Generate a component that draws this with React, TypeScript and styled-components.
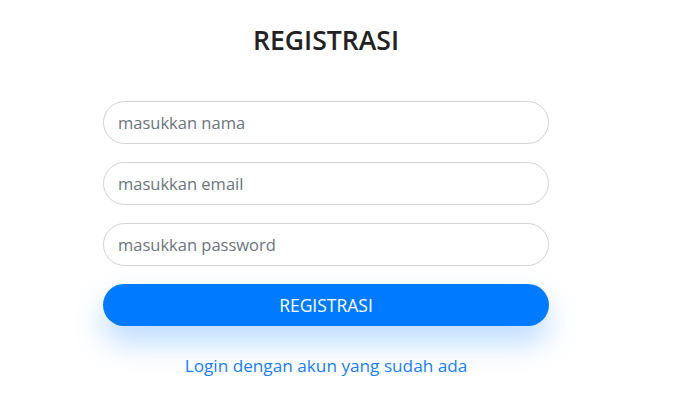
import React from 'react';
import styled, { createGlobalStyle } from 'styled-components';

const GlobalStyle = createGlobalStyle`
  body {
    margin: 0;
    background: #fff;
    font-family: "Open Sans", "Noto Sans", sans-serif;
  }
`;

const Page = styled.div`
  padding: 22px 0 0 103px;
`;

const Form = styled.form`
  width: 446px;
  display: flex;
  flex-direction: column;
  align-items: stretch;
`;

const Title = styled.h2`
  margin: 0 0 42px 0;
  text-align: center;
  font-size: 26.6px;
  line-height: 37px;
  font-weight: 600;
  color: #222;
`;

const Field = styled.input`
  box-sizing: border-box;
  height: 43px;
  margin-bottom: 18px;
  padding: 0 14px;
  border: 1px solid #d3d3d8;
  border-radius: 22px;
  font-family: inherit;
  font-size: 16.5px;
  color: #333;
  outline: none;

  &::placeholder {
    color: #6c757d;
  }
`;

const SubmitButton = styled.button`
  height: 42px;
  border: none;
  border-radius: 21px;
  background: #007bff;
  color: #fff;
  font-family: inherit;
  font-size: 17.5px;
  text-transform: uppercase;
  box-shadow: 0 16px 30px rgba(0, 123, 255, 0.27);
  cursor: pointer;
`;

const LoginLink = styled.a`
  margin-top: 28px;
  text-align: center;
  font-size: 17.2px;
  color: #1a7ef5;
  text-decoration: none;
`;

export default function App() {
  return (
    <>
      <GlobalStyle />
      <Page>
        <Form onSubmit={(e) => e.preventDefault()}>
          <Title>REGISTRASI</Title>
          <Field type="text" placeholder="masukkan nama" />
          <Field type="email" placeholder="masukkan email" />
          <Field type="password" placeholder="masukkan password" />
          <SubmitButton type="submit">Registrasi</SubmitButton>
          <LoginLink href="#">Login dengan akun yang sudah ada</LoginLink>
        </Form>
      </Page>
    </>
  );
}
